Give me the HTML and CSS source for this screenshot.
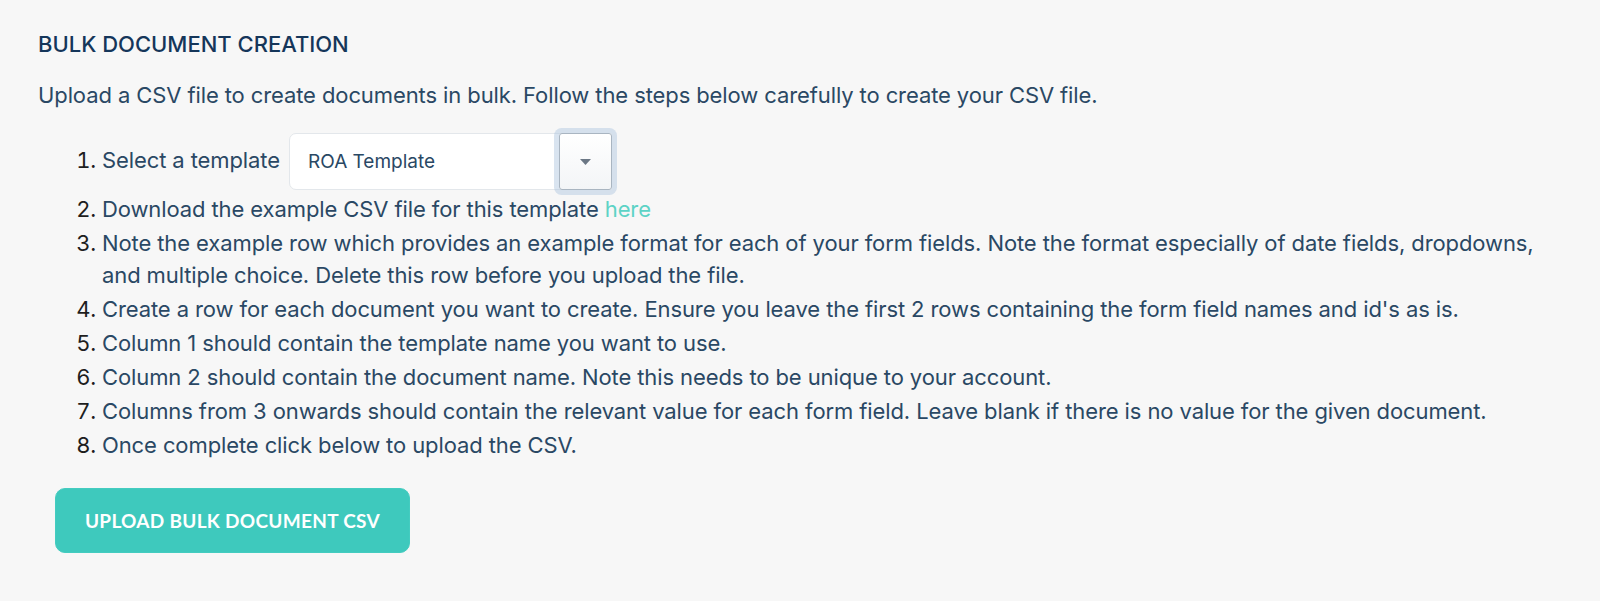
FILE: index.html
```html
<!DOCTYPE html>
<html lang="en">
<head>
    <meta charset="UTF-8">
    <meta name="viewport" content="width=device-width, initial-scale=1.0">
    <title>Bulk Document Creation</title>
    <link rel="stylesheet" href="styles.css">
</head>
<body>
    <div class="container">
        <h1>Bulk Document Creation</h1>
        <p class="intro">Upload a CSV file to create documents in bulk. Follow the steps below carefully to create your CSV file.</p>

        <ol class="steps">
            <li class="step-select">
                <span>Select a template</span>
                <div class="select">
                    <span class="select-value">ROA Template</span>
                    <span class="select-toggle">
                        <svg width="11" height="6" viewBox="0 0 11 6"><path d="M0 0 L11 0 L5.5 6 Z" fill="#6b7785"/></svg>
                    </span>
                </div>
            </li>
            <li><span>Download the example CSV file for this template <a href="#">here</a></span></li>
            <li><span>Note the example row which provides an example format for each of your form fields. Note the format especially of date fields, dropdowns, and multiple choice. Delete this row before you upload the file.</span></li>
            <li><span>Create a row for each document you want to create. Ensure you leave the first 2 rows containing the form field names and id's as is.</span></li>
            <li><span>Column 1 should contain the template name you want to use.</span></li>
            <li><span>Column 2 should contain the document name. Note this needs to be unique to your account.</span></li>
            <li><span>Columns from 3 onwards should contain the relevant value for each form field. Leave blank if there is no value for the given document.</span></li>
            <li><span>Once complete click below to upload the CSV.</span></li>
        </ol>

        <button class="upload">Upload Bulk Document CSV</button>
    </div>
</body>
</html>
```

FILE: styles.css
```css
body {
    margin: 0;
    background-color: #f7f7f7;
    font-family: Inter, "Noto Sans", sans-serif;
    color: #2a4864;
}

.container {
    padding: 29px 38px;
}

h1 {
    margin: 0 0 20px 0;
    font-size: 22px;
    line-height: 30px;
    font-weight: 500;
    text-transform: uppercase;
    color: #15365a;
}

.intro {
    margin: 0 0 22px 0;
    font-size: 22px;
    line-height: 32px;
    letter-spacing: -0.1px;
}

.steps {
    margin: 0;
    padding-left: 64px;
    font-size: 22px;
    line-height: 32px;
    letter-spacing: -0.1px;
    color: #1e1e1e;
}

.steps li {
    margin-bottom: 2px;
}

.steps li span {
    color: #2a4864;
}

.steps .step-select {
    margin-bottom: 3px;
}

.select {
    display: inline-flex;
    vertical-align: middle;
    width: 323px;
    height: 57px;
    margin-left: 3px;
    background-color: #ffffff;
    border: 1px solid #e3e7eb;
    border-radius: 7px;
    box-sizing: border-box;
    letter-spacing: 0;
}

.steps .select-value {
    flex: 1;
    padding-left: 18px;
    font-size: 19px;
    line-height: 55px;
    color: #2a4864;
}

.steps .select-toggle {
    display: flex;
    align-items: center;
    justify-content: center;
    width: 51px;
    margin: -1px -1px -1px 0;
    background: linear-gradient(#ffffff, #f3f5f7);
    border: 1px solid #a9b5c1;
    border-radius: 3px;
    box-shadow: 0 0 0 5px rgba(170, 196, 222, 0.45);
}

a {
    color: #5dd3c6;
    text-decoration: none;
}

.upload {
    margin: 25px 0 0 17px;
    width: 355px;
    height: 65px;
    background-color: #3ec9bd;
    border: 1px solid #44ccc0;
    border-radius: 10px;
    color: #ffffff;
    font-family: Lato, "Open Sans", sans-serif;
    font-weight: 700;
    font-size: 19px;
    letter-spacing: 0.3px;
    text-transform: uppercase;
    cursor: pointer;
}
```
